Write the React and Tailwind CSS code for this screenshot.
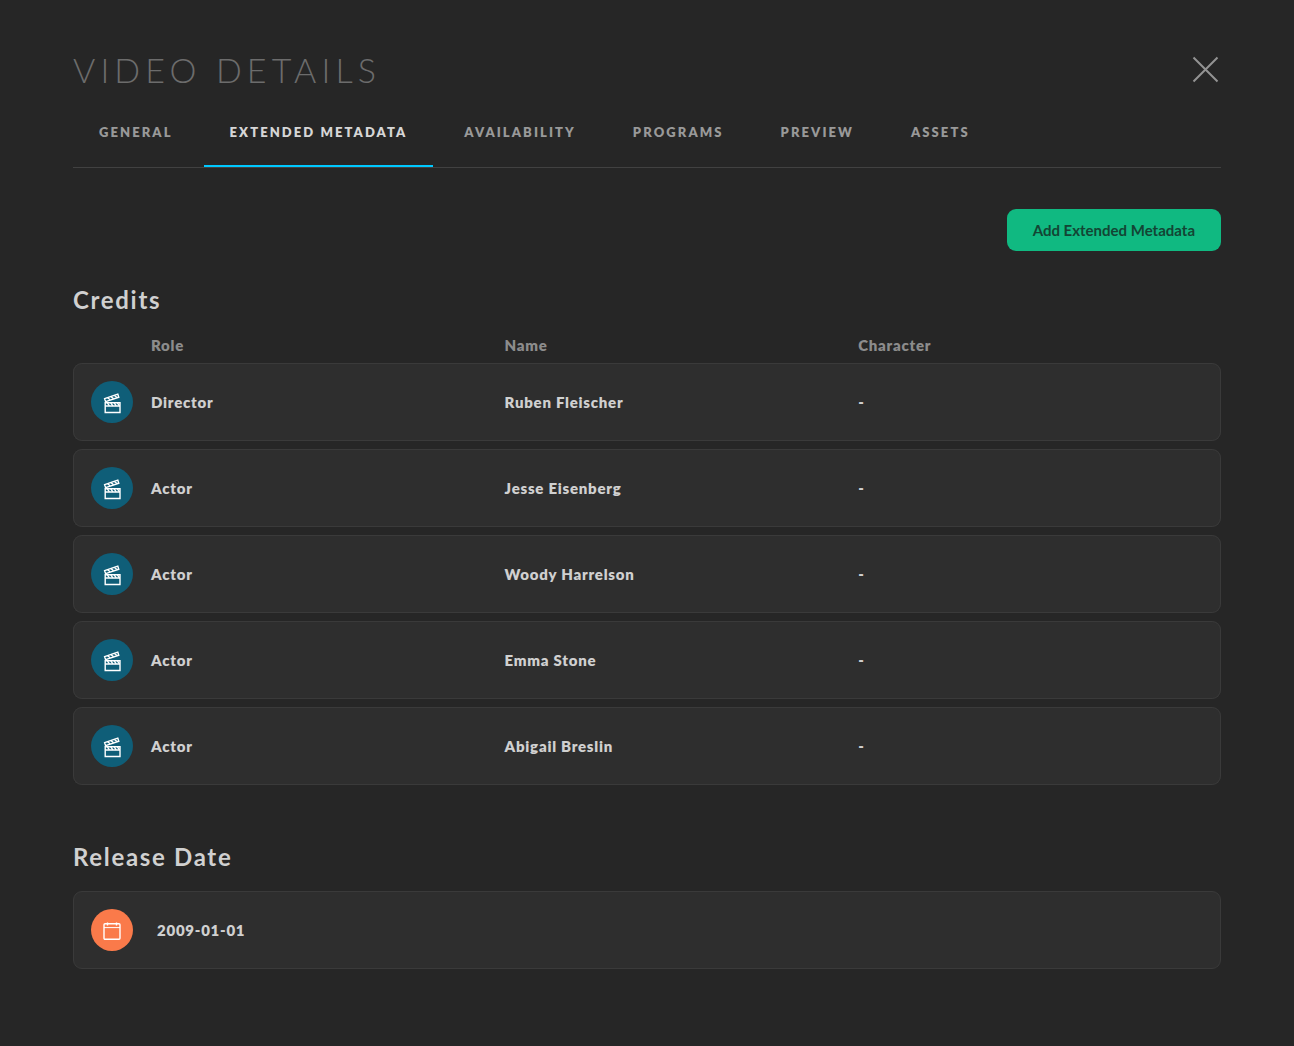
import { useState } from 'react';
import clsx from 'clsx';

const tabs = ['General', 'Extended Metadata', 'Availability', 'Programs', 'Preview', 'Assets'];

const credits = [
  { role: 'Director', name: 'Ruben Fleischer', character: '-' },
  { role: 'Actor', name: 'Jesse Eisenberg', character: '-' },
  { role: 'Actor', name: 'Woody Harrelson', character: '-' },
  { role: 'Actor', name: 'Emma Stone', character: '-' },
  { role: 'Actor', name: 'Abigail Breslin', character: '-' },
];

const CloseIcon = () => (
  <svg className="size-7" viewBox="0 0 28 28" fill="none" stroke="currentColor" strokeWidth="2" aria-hidden="true">
    <path d="M1.5 2.5 25.5 26.5M25.5 2.5 1.5 26.5" />
  </svg>
);

const ClapperIcon = () => (
  <svg className="size-6" viewBox="0 0 24 24" fill="none" stroke="currentColor" strokeWidth="1.4" aria-hidden="true">
    <path d="M5.2 12.7h14.8v9.8h-14.8zM5.2 16h14.8" />
    <path d="M7.4 12.9l2 3M10.8 12.9l2 3M14.2 12.9l2 3M17.4 12.9l2 3" />
    <path d="M4.6 8.6 17.8 4.2l1 3L5.6 11.6z" />
    <path d="M7.6 7.8l2.6 2M11 6.6l2.6 2.1M14.4 5.5l2.6 2" />
  </svg>
);

const CalendarIcon = () => (
  <svg className="size-5" viewBox="0 0 20 20" fill="none" stroke="currentColor" strokeWidth="1.4" aria-hidden="true">
    <rect x="2" y="3.8" width="16" height="15.4" rx="1" />
    <path d="M2 7.6h16" strokeWidth="1" />
    <path d="M5.5 2.4v3.2M14.5 2.4v3.2" />
  </svg>
);

const App = () => {
  const [activeTab, setActiveTab] = useState('Extended Metadata');

  return (
    <div className="min-h-screen bg-[#262626] px-[73px] pt-[45px] pb-[77px] font-['Lato',sans-serif] text-[#d0d0d0]">
      <header className="flex items-start justify-between">
        <h1 className="text-[34px] leading-[50px] font-light tracking-[0.15em] text-[#6c6c6c] uppercase">Video Details</h1>
        <button type="button" aria-label="Close" className="mt-[10px] mr-px cursor-pointer text-[#939393]">
          <CloseIcon />
        </button>
      </header>

      <div role="tablist" className="mt-[10px] flex gap-[5px] border-b border-[#414141]">
        {tabs.map((tab) => (
          <button
            key={tab}
            type="button"
            role="tab"
            aria-selected={tab === activeTab}
            onClick={() => setActiveTab(tab)}
            className={clsx(
              'cursor-pointer border-b-2 px-[26px] pt-[17px] pb-[23px] text-[13px] leading-5 font-extrabold tracking-[0.16em] uppercase',
              tab === activeTab ? 'border-[#00c8ff] text-[#d6d6d6]' : 'border-transparent text-[#999999]'
            )}
          >
            {tab}
          </button>
        ))}
      </div>

      <div className="mt-[41px] flex justify-end">
        <button
          type="button"
          className="h-[42px] cursor-pointer rounded-[9px] bg-[#10b981] px-[26px] text-[15px] font-bold text-[#134534]"
        >
          Add Extended Metadata
        </button>
      </div>

      <section className="mt-[31px]">
        <h2 className="text-2xl leading-9 font-bold tracking-[0.07em]">Credits</h2>
        <table className="mt-[9px] w-full table-fixed border-separate border-spacing-x-0 border-spacing-y-2 text-left text-[15px] tracking-wider">
          <thead>
            <tr className="leading-5 text-[#8c8c8c]">
              <th className="w-[78px]" aria-label="Type" />
              <th className="w-[30.8%] font-extrabold">Role</th>
              <th className="w-[30.8%] font-extrabold">Name</th>
              <th className="font-extrabold">Character</th>
            </tr>
          </thead>
          <tbody>
            {credits.map((credit) => (
              <tr key={credit.name} className="h-[78px] bg-[#2e2e2e] font-extrabold">
                <td className="rounded-l-[9px] border-y border-l border-[#3a3a3a] pl-[17px]">
                  <span className="flex size-[42px] items-center justify-center rounded-full bg-[#0f5e78] text-white">
                    <ClapperIcon />
                  </span>
                </td>
                <td className="border-y border-[#3a3a3a]">{credit.role}</td>
                <td className="border-y border-[#3a3a3a]">{credit.name}</td>
                <td className="rounded-r-[9px] border-y border-r border-[#3a3a3a]">{credit.character}</td>
              </tr>
            ))}
          </tbody>
        </table>
      </section>

      <section className="mt-[46px]">
        <h2 className="text-2xl leading-9 font-bold tracking-[0.07em]">Release Date</h2>
        <div className="mt-4 flex h-[78px] items-center gap-6 rounded-[9px] border border-[#3a3a3a] bg-[#2e2e2e] pl-[17px]">
          <span className="flex size-[42px] items-center justify-center rounded-full bg-[#fa7a4a] text-white">
            <CalendarIcon />
          </span>
          <span className="text-[15px] font-extrabold tracking-wider">2009-01-01</span>
        </div>
      </section>
    </div>
  );
};

export default App;
